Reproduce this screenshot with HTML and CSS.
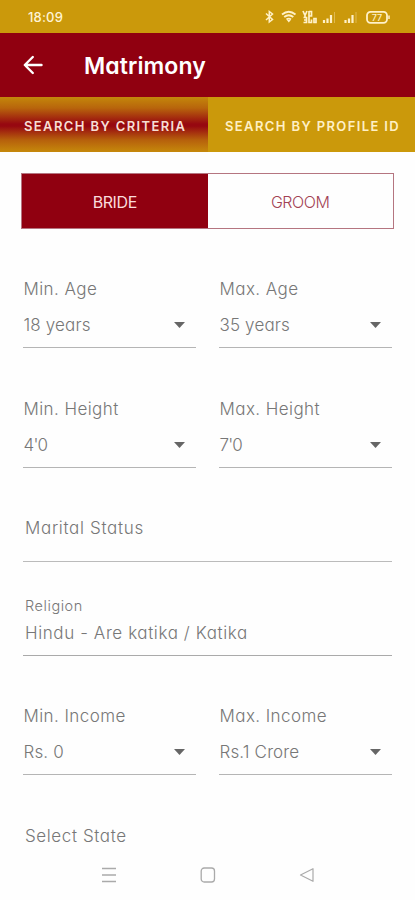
FILE: index.html
```html
<!DOCTYPE html>
<html lang="en">
<head>
<meta charset="utf-8">
<meta name="viewport" content="width=device-width, initial-scale=1">
<title>Matrimony</title>
<link rel="stylesheet" href="styles.css">
</head>
<body>
<div class="status">
  <span class="clock">18:09</span>
  <svg class="status-icons" width="128" height="18" viewBox="0 0 128 18" fill="none" stroke="#fff1c8">
    <path d="M3 5.500l6.500 6-3.200 2.500V3.500L9.500 6 3 12" stroke-width="1.500"/>
    <path d="M19 6.500Q25.800 1 32.500 6.500M21.200 9Q25.800 5.500 30.300 9M23.500 11.500Q25.800 9.800 28 11.500" stroke-width="1.900"/>
    <path d="M25.800 14.500l-2-2.500h4z" fill="#fff1c8" stroke="none"/>
    <path d="M40 3l2 4.500L44 3M42 7v2M46 3v5h2.500V3.500H46M40.500 9.500h3v5h-3M43 12h-2M46 8.500v6h2.500v-3M51 10.500h2v4h-2z" stroke-width="1.700"/>
    <path d="M61 12v3M64.500 10.500V15M68 7v8M82.500 12v3M86 10.500V15M89.500 7v8" stroke-width="2.200"/>
    <path d="M71.500 4v11M93 4v11" stroke="#dfb950" stroke-width="1"/>
    <rect x="104" y="3.800" width="20" height="11" rx="3.500" stroke-width="1.800"/>
    <path d="M126 7.500v3.500" stroke-width="1.500"/>
    <text x="114" y="12.500" text-anchor="middle" class="battery">77</text>
  </svg>
</div>
<header class="appbar">
  <svg width="20" height="20" viewBox="0 0 20 20" fill="none" stroke="#fff" stroke-width="2.400" stroke-linecap="round" stroke-linejoin="round"><path d="M18.500 10H2M9.800 2L1.800 10l8 8"/></svg>
  <h1>Matrimony</h1>
</header>
<nav class="tabs">
  <div class="tab active"><span>SEARCH BY CRITERIA</span></div>
  <div class="tab"><span>SEARCH BY PROFILE ID</span></div>
</nav>
<main>
  <div class="toggle">
    <div class="option on"><span>BRIDE</span></div>
    <div class="option"><span>GROOM</span></div>
  </div>
  <section class="pair age">
    <div class="field"><label>Min. Age</label><div class="select"><span>18 years</span><i class="caret"></i></div></div>
    <div class="field"><label>Max. Age</label><div class="select"><span>35 years</span><i class="caret"></i></div></div>
  </section>
  <section class="pair height">
    <div class="field"><label>Min. Height</label><div class="select"><span class="feet">4'0</span><i class="caret"></i></div></div>
    <div class="field"><label>Max. Height</label><div class="select"><span class="feet">7'0</span><i class="caret"></i></div></div>
  </section>
  <section class="marital"><span>Marital Status</span></section>
  <section class="religion"><label>Religion</label><span>Hindu - Are katika / Katika</span></section>
  <section class="pair income">
    <div class="field"><label>Min. Income</label><div class="select"><span>Rs. 0</span><i class="caret"></i></div></div>
    <div class="field"><label>Max. Income</label><div class="select"><span>Rs.1 Crore</span><i class="caret"></i></div></div>
  </section>
  <section class="state"><span>Select State</span></section>
</main>
<footer class="sysnav">
  <svg width="16" height="16" viewBox="0 0 16 16" stroke="#aaa" fill="none"><path d="M1 1.500h14M1 8h14M1 14.500h14" stroke-width="1.300"/></svg>
  <svg width="16" height="16" viewBox="0 0 16 16" stroke="#aaa" fill="none"><rect x="1.200" y="1" width="13.300" height="14" rx="3" stroke-width="1.300"/></svg>
  <svg width="16" height="16" viewBox="0 0 16 16" stroke="#aaa" fill="none"><path d="M14 1.700v12.600L1.500 8z" stroke-width="1.200" stroke-linejoin="round"/></svg>
</footer>
</body>
</html>
```
FILE: styles.css
```css
* { box-sizing: border-box; }
body {
  margin: 0;
  height: 900px;
  overflow: hidden;
  display: flex;
  flex-direction: column;
  background: #fefefe;
  color: #777;
  font-family: Inter, "Liberation Sans", sans-serif;
  font-feature-settings: "cv11";
  font-weight: 300;
  font-size: 17px;
  white-space: nowrap;
}
.status {
  height: 33px;
  flex: none;
  display: flex;
  justify-content: space-between;
  align-items: center;
  padding: 0 24px 0 28px;
  background: #cb990b;
}
.clock { color: #fff4d5; font-size: 13px; font-weight: 500; letter-spacing: 0.2px; }
.battery { fill: #fff1c8; stroke: none; font-size: 9px; font-weight: 500; }
.appbar {
  height: 64px;
  flex: none;
  display: flex;
  align-items: center;
  gap: 41px;
  padding-left: 23px;
  background: #900010;
  color: #fff;
}
h1 { margin: 0; padding-top: 2px; font-size: 23px; font-weight: 600; line-height: 30px; letter-spacing: 0.1px; }
.tabs { height: 55px; flex: none; display: flex; background: #cb990b; }
.tab {
  flex: 1;
  display: flex;
  align-items: center;
  padding: 2px 0 0 17px;
  color: #fff0c5;
  font-size: 13px;
  font-weight: 600;
  letter-spacing: 1.38px;
}
.tab.active {
  flex: none;
  width: 208px;
  padding-left: 24px;
  color: #f7dfd5;
  background: linear-gradient(#c4870b 0%, #b8650c 20%, #970810 49%, #970810 53%, #b6600c 78%, #c6890b 100%);
}
main { flex: 1; display: flex; flex-direction: column; padding: 21px 21px 0; min-height: 0; }
.toggle { display: flex; height: 56px; flex: none; border: 1px solid #b57580; }
.option { flex: 1; display: flex; align-items: center; justify-content: center; padding-top: 1px; font-size: 16px; letter-spacing: -0.4px; color: #a34254; }
.option.on { background: #900010; color: #fadbdc; font-weight: 400; }
.pair { display: flex; gap: 23px; padding: 0 2px; flex: none; }
.field { width: 173px; height: 72px; border-bottom: 1px solid #b5b5b5; }
.field label { display: block; height: 24px; padding-left: 0.5px; line-height: 26px; letter-spacing: 0.42px; }
.select { display: flex; justify-content: space-between; align-items: center; height: 24px; margin-top: 13px; padding: 0 11px 0 0.5px; letter-spacing: 0.15px; }
.feet { letter-spacing: -0.8px; }
.caret { width: 11px; height: 6px; background: #666; clip-path: polygon(0 0, 100% 0, 50% 100%); }
.age { margin-top: 47px; }
.height { margin-top: 48px; }
.marital { height: 94px; flex: none; margin: 0 2px; padding: 48px 0 0 2px; line-height: 24px; letter-spacing: 0.67px; border-bottom: 1px solid #bbb; }
.religion { height: 94px; flex: none; margin: 0 2px; padding: 34px 0 0 2px; border-bottom: 1px solid #aaa; }
.religion label { display: block; font-size: 14.5px; line-height: 20px; letter-spacing: 0.55px; }
.religion span { display: block; line-height: 24px; margin-top: 5px; letter-spacing: 0.6px; }
.income { margin-top: 47px; }
.state { margin-top: 49px; padding-left: 4px; line-height: 24px; letter-spacing: 0.6px; }
.sysnav { height: 50px; flex: none; display: flex; justify-content: center; align-items: center; gap: 83px; }
```
